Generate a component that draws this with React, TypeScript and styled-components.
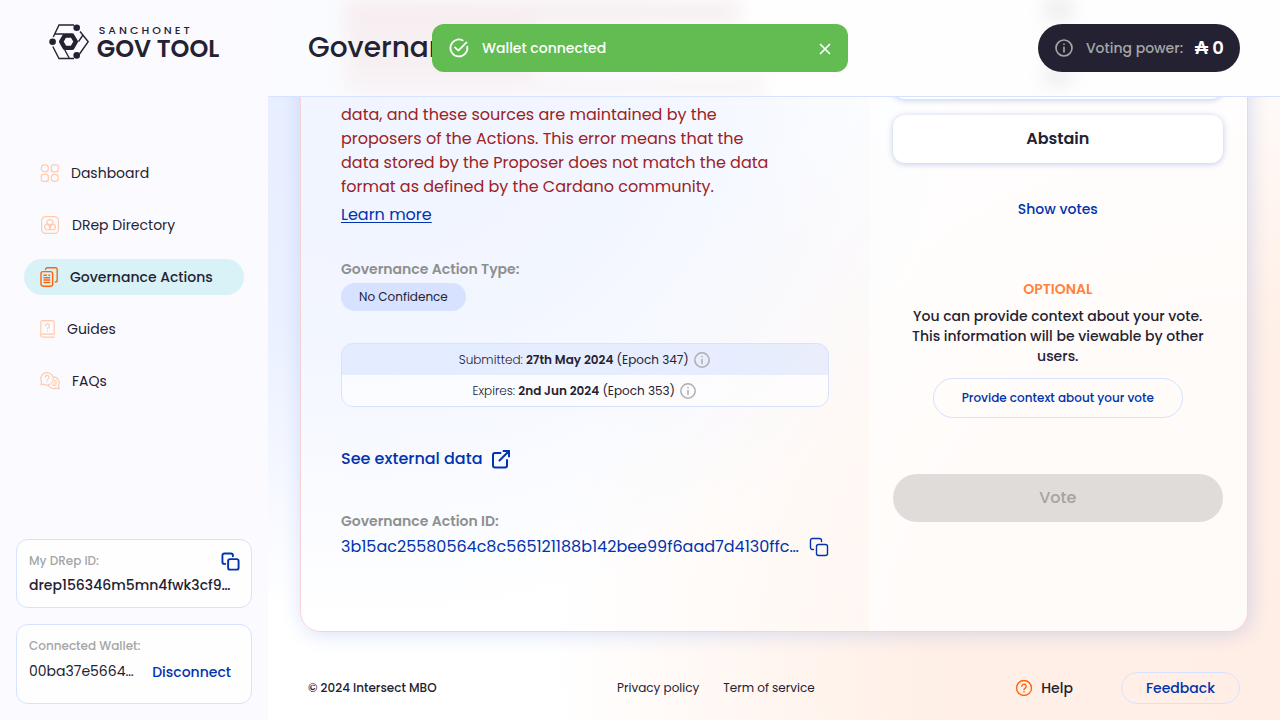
import React from "react";
import styled, { createGlobalStyle } from "styled-components";

const ink = "#242232";
const blue = "#0033ad";
const orange = "#ff640a";
const line = "#d6e2ff";

const GlobalStyle = createGlobalStyle`
  *, *::before, *::after { box-sizing: border-box; }
  body {
    margin: 0;
    color: ${ink};
    background: #fff;
    font-family: Poppins, "Open Sans", sans-serif;
    font-size: 14px;
    line-height: 20px;
  }
  h1, h2, p, ul, dl, dd { margin: 0; padding: 0; }
  ul { list-style: none; }
  a { color: inherit; text-decoration: none; }
  button { font: inherit; color: inherit; border: 0; background: none; padding: 0; cursor: pointer; }
  svg { display: block; flex: none; }
`;

/* ---------- icons ---------- */

const Glyph = styled.svg.attrs({ fill: "none", "aria-hidden": true })`
  stroke: currentColor;
  stroke-linecap: round;
  stroke-linejoin: round;
`;

const CopyIcon = ({ weight = 2, size = 20 }: { weight?: number; size?: number }) => (
  <Glyph width={size} height={size} viewBox="0 0 20 20" strokeWidth={weight}>
    <rect x="7.5" y="7.5" width="11" height="11" rx="2" />
    <path d="M4.500 12.500h-1a2 2 0 0 1-2-2v-7a2 2 0 0 1 2-2h7a2 2 0 0 1 2 2v1" />
  </Glyph>
);

const ExternalIcon = () => (
  <Glyph width="20" height="20" viewBox="0 0 20 20" strokeWidth="2">
    <path d="M16 11v5.500a2 2 0 0 1-2 2H4a2 2 0 0 1-2-2V6a2 2 0 0 1 2-2h5.500" />
    <path d="M12.500 2H18v5.500M8.500 11.500 18 2" />
  </Glyph>
);

const InfoIcon = ({ size = 18 }: { size?: number }) => (
  <Glyph width={size} height={size} viewBox="0 0 18 18" strokeWidth="1.500">
    <circle cx="9" cy="9" r="7.200" />
    <path d="M9 8.500v4M9 5.500v.2" />
  </Glyph>
);

const HelpIcon = () => (
  <Glyph width="18" height="18" viewBox="0 0 18 18" strokeWidth="1.400">
    <circle cx="9" cy="9" r="7.500" />
    <path d="M6.900 7.300a2.100 2.100 0 1 1 3.200 1.800c-.7.400-1.100.8-1.100 1.600M9 12.800v.1" />
  </Glyph>
);

const CheckCircleIcon = () => (
  <Glyph width="22" height="22" viewBox="0 0 22 22" strokeWidth="1.700">
    <path d="M19.300 9.600A8.500 8.500 0 1 1 14.800 3.400" />
    <path d="m7 10.300 3.400 3.400L18.500 5.300" />
  </Glyph>
);

const CloseIcon = () => (
  <Glyph width="14" height="14" viewBox="0 0 14 14" strokeWidth="1.700">
    <path d="m2.500 3.500 9 9M11.500 3.500l-9 9" />
  </Glyph>
);

const DashboardIcon = () => (
  <Glyph width="19" height="20" viewBox="0 0 19 20" strokeWidth="1.200">
    <rect x="1.300" y="1.800" width="7" height="7" rx="3" />
    <rect x="11.300" y="1.800" width="7" height="7" rx="2" />
    <rect x="1.300" y="11.400" width="7" height="7" rx="2" />
    <rect x="11.300" y="11.400" width="7" height="7" rx="3.400" />
  </Glyph>
);

const DirectoryIcon = () => (
  <Glyph width="20" height="20" viewBox="0 0 20 20" strokeWidth="1.200">
    <rect x="1.600" y="1.600" width="16.800" height="16.800" rx="4" />
    <circle cx="10" cy="7.600" r="3" />
    <circle cx="7.600" cy="12" r="3" />
    <circle cx="12.400" cy="12" r="3" />
  </Glyph>
);

const ActionsIcon = () => (
  <Glyph width="18" height="20" viewBox="0 0 18 20" strokeWidth="1.400">
    <rect x="1" y="4.600" width="11.600" height="14.600" rx="2" />
    <path d="M5.600 2.600c0-1 .8-1.800 1.800-1.800h8c1 0 1.800.8 1.800 1.800v10.600c0 1-.8 1.800-1.800 1.800" />
    <path d="M4 8.300h2.500M8.800 8.300h.9M4 10.700h5.700M4 13h5.700M4 15.500h5.700" />
  </Glyph>
);

const GuidesIcon = () => (
  <Glyph width="15" height="20" viewBox="0 0 15 20" strokeWidth="1.200">
    <path d="M14.200 15.200V3.300c0-1-.6-1.600-1.600-1.600H2.600C1.600 1.700.8 2.300.8 3.300v12.900M14.200 15.200H2.600c-1 0-1.800.6-1.800 1.500s.8 1.500 1.800 1.500h11.600" />
    <path d="M5.600 6.800a1.900 1.900 0 1 1 2.800 1.700c-.6.300-.9.700-.9 1.300M7.500 11.800v.1" />
  </Glyph>
);

const FaqIcon = () => (
  <Glyph width="20" height="20" viewBox="0 0 20 20" strokeWidth="1.200">
    <path d="M7 1.600a6.200 6.200 0 1 1-3 11.600l-3 .700.600-3A6.200 6.200 0 0 1 7 1.600Z" />
    <path d="M5.200 6.300a1.900 1.900 0 1 1 2.800 1.700c-.6.300-.9.600-.9 1.100M7.100 11v.1" />
    <path d="M13.300 5.800a6 6 0 0 1 5.200 8.800l.700 3.100-3.200-.6a6 6 0 0 1-7.600-2.600M14.500 9.800h2M14.200 12h2.600M12.500 14.200h3.500" />
  </Glyph>
);

const HexMark = () => (
  <svg width="40" height="36" viewBox="0 0 40 36" fill="none" stroke={ink} strokeWidth="1.400" aria-hidden="true">
    <path d="M4.300 13 10 1h15M31 7.500l8.200 10.200L30.500 30M25 34.500H10L3.800 22.500M5.500 10H15M34.300 10.500l-4.800 7.200M15.800 26l4.400 8" />
    <circle cx="27.700" cy="3.800" r="3.300" fill={ink} stroke="none" />
    <circle cx="3.600" cy="17.700" r="3.300" fill={ink} stroke="none" />
    <circle cx="27.700" cy="31.400" r="3.300" fill={ink} stroke="none" />
    <path d="M15.800 11.500h7.400l3.600 6.200-3.600 6.200h-7.400l-3.600-6.200Z" strokeWidth="4.400" strokeLinejoin="round" />
  </svg>
);

/* ---------- shell ---------- */

const Shell = styled.div`
  display: grid;
  grid-template-columns: 268px minmax(0, 1fr);
  height: 100vh;
  min-height: 640px;
`;

const Sidebar = styled.aside`
  display: flex;
  flex-direction: column;
  padding: 24px 16px 16px;
  background: #fbfbff;
`;

const Logo = styled.a`
  display: flex;
  align-items: center;
  justify-content: center;
  gap: 8px;
  height: 36px;
`;

const LogoText = styled.span`
  display: grid;
  font-weight: 600;
  font-size: 24px;
  line-height: 24px;
`;

const LogoNet = styled.span`
  padding-left: 2px;
  font-weight: 500;
  font-size: 11px;
  line-height: 14px;
  letter-spacing: 3px;
`;

const Nav = styled.nav`
  padding: 95px 8px 0;
  flex: 1;
`;

const NavList = styled.ul`
  display: grid;
  gap: 16px;
`;

const NavLink = styled.a<{ $active?: boolean }>`
  display: flex;
  align-items: center;
  gap: 12px;
  height: 36px;
  padding: 0 16px;
  border-radius: 18px;
  font-weight: ${(p) => (p.$active ? 500 : 400)};
  background: ${(p) => (p.$active ? "#d8f2f7" : "transparent")};
  svg { color: ${(p) => (p.$active ? orange : "#ffcbad")}; }
`;

const SideCards = styled.div`
  display: grid;
  gap: 16px;
`;

const SideCard = styled.section<{ $tall?: boolean }>`
  display: grid;
  align-content: start;
  gap: 4px;
  padding: 11px;
  padding-bottom: ${(p) => (p.$tall ? "21px" : "12px")};
  border: 1px solid ${line};
  border-radius: 12px;
  background: #fefeff;
`;

const SideRow = styled.div`
  display: flex;
  align-items: center;
  justify-content: space-between;
  padding-left: 1px;
`;

const SideLabel = styled.span`
  font-size: 12px;
  font-weight: 500;
  color: #a5a6a5;
`;

const SideValue = styled.span<{ $strong?: boolean }>`
  overflow: hidden;
  text-overflow: ellipsis;
  white-space: nowrap;
  font-weight: ${(p) => (p.$strong ? 500 : 400)};
`;

const TextButton = styled.button`
  font-weight: 500;
  color: ${blue};
`;

const Disconnect = styled(TextButton)`
  padding: 2px 9px 0 0;
`;

const IconButton = styled.button<{ $light?: boolean }>`
  display: grid;
  place-items: center;
  color: ${(p) => (p.$light ? "#fff" : blue)};
`;

/* ---------- main ---------- */

const Main = styled.main`
  position: relative;
  min-height: 0;
  background:
    radial-gradient(ellipse 60% 70% at 10% 16%, rgba(214, 226, 255, 0.6) 0%, rgba(214, 226, 255, 0.5) 45%, rgba(214, 226, 255, 0) 100%),
    radial-gradient(ellipse 72% 94% at 100% 92%, #ffeee5 0%, #fff0e7 50%, rgba(255, 240, 231, 0) 100%),
    #fff;
`;

const TopBar = styled.header`
  position: absolute;
  z-index: 1;
  inset: 0 0 auto;
  display: flex;
  align-items: center;
  justify-content: space-between;
  padding: 24px 40px;
  overflow: hidden;
  border-bottom: 1px solid ${line};
  background: linear-gradient(90deg, #fafbff, #fefeff 40%, #fefefe);

  &::before {
    content: "";
    position: absolute;
    z-index: -1;
    inset: 0;
    filter: blur(10px);
    background:
      linear-gradient(#f6edf0, #f6edf0) 76px 0 / 394px 24px no-repeat,
      linear-gradient(#f7f0f3, #f7f0f3) 76px 24px / 192px 52px no-repeat,
      linear-gradient(#f8f3f6, #f8f3f6) 76px 76px / 420px 24px no-repeat,
      linear-gradient(#e4e4e6, #e4e4e6) right 210px top 2px / 24px 16px no-repeat,
      linear-gradient(#e4e4e6, #e4e4e6) right 210px top 68px / 24px 14px no-repeat;
  }
`;

const Title = styled.h1`
  font-size: 28px;
  font-weight: 500;
  line-height: 48px;
`;

const PowerPill = styled.div`
  display: flex;
  align-items: center;
  height: 48px;
  padding: 0 16px;
  border-radius: 24px;
  background: ${ink};
  color: #a5a6a5;
  font-weight: 500;
  svg { margin-right: 12px; }
`;

const PowerValue = styled.strong`
  margin-left: 12px;
  font-size: 18px;
  font-weight: 600;
  color: #fff;
`;

const Scroller = styled.div`
  display: flex;
  flex-direction: column-reverse;
  height: 100%;
  overflow-y: auto;
  scrollbar-width: none;
`;

const Content = styled.div`
  flex: none;
  padding: 96px 32px 0;
`;

const Card = styled.article`
  display: grid;
  grid-template-columns: 3fr 2fr;
  border: 1px solid #f8d3d3;
  border-radius: 20px;
  overflow: hidden;
  background: rgba(255, 255, 255, 0.4);
  box-shadow: 2px 2px 20px 0 rgba(47, 98, 220, 0.2);
`;

const Details = styled.div`
  display: flex;
  flex-direction: column;
  justify-content: flex-end;
  min-width: 0;
  padding: 40px 40px 72px;
`;

const ErrorBlock = styled.div`
  padding-right: 48px;
  color: #9c2224;
`;

const ErrorText = styled.p`
  font-size: 16px;
  line-height: 24px;
`;

const LearnMore = styled.a`
  display: inline-block;
  margin-top: 4px;
  font-size: 16px;
  line-height: 24px;
  color: ${blue};
  text-decoration: underline;
  text-decoration-thickness: 1px;
  text-underline-offset: 2px;
`;

const Label = styled.h2`
  font-size: 14px;
  font-weight: 600;
  line-height: 20px;
  color: #8e908e;
`;

const TypeBlock = styled.section`
  display: grid;
  justify-items: start;
  gap: 4px;
  margin-top: 32px;
`;

const Chip = styled.span`
  padding: 4px 18px;
  border-radius: 14px;
  background: ${line};
  font-size: 12px;
`;

const Dates = styled.div`
  margin-top: 32px;
  border: 1px solid ${line};
  border-radius: 12px;
  overflow: hidden;
`;

const DateRow = styled.div<{ $tint?: boolean }>`
  display: flex;
  align-items: center;
  justify-content: center;
  gap: 4px;
  height: 31px;
  font-size: 12px;
  background: ${(p) => (p.$tint ? "rgba(214, 226, 255, 0.5)" : "rgba(255, 255, 255, 0.5)")};
  svg { color: #adaead; }
`;

const Light = styled.span`
  font-weight: 300;
`;

const Strong = styled.strong`
  font-weight: 600;
`;

const ExternalLink = styled.a`
  display: flex;
  width: fit-content;
  align-items: center;
  gap: 8px;
  margin: 40px 0;
  font-size: 16px;
  font-weight: 500;
  line-height: 24px;
  color: ${blue};
`;

const IdRow = styled.div`
  display: flex;
  align-items: center;
  justify-content: space-between;
  gap: 8px;
  margin-top: 4px;
  font-size: 16px;
  line-height: 24px;
  color: ${blue};
`;

const IdText = styled.span`
  overflow: hidden;
  text-overflow: ellipsis;
  white-space: nowrap;
`;

const VotePanel = styled.form`
  display: flex;
  flex-direction: column;
  align-items: center;
  justify-content: flex-end;
  min-width: 0;
  padding: 40px 24px 109px;
  background: rgba(255, 255, 255, 0.6);
`;

const Choices = styled.fieldset`
  display: grid;
  gap: 16px;
  width: 100%;
  margin: 0;
  padding: 0;
  border: 0;
`;

const Choice = styled.label`
  display: grid;
  place-items: center;
  height: 48px;
  border-radius: 12px;
  background: #fff;
  box-shadow: 0 1px 6px 0 rgba(0, 51, 173, 0.25);
  font-size: 16px;
  font-weight: 600;
  cursor: pointer;
  input { appearance: none; position: absolute; margin: 0; }
`;

const ShowVotes = styled(TextButton)`
  margin-top: 36px;
`;

const Optional = styled.p`
  margin-top: 60px;
  font-weight: 600;
  color: #ff833b;
`;

const Hint = styled.p`
  margin-top: 7px;
  padding: 0 8px;
  font-weight: 500;
  text-align: center;
`;

const Outline = styled.button<{ $small?: boolean }>`
  border: 1px solid ${line};
  border-radius: 20px;
  color: ${blue};
  font-weight: 500;
  font-size: ${(p) => (p.$small ? "12px" : "14px")};
  height: ${(p) => (p.$small ? "40px" : "32px")};
  padding: 0 ${(p) => (p.$small ? "28px" : "24px")};
`;

const ContextButton = styled(Outline)`
  margin-top: 12px;
`;

const VoteButton = styled.button`
  width: 100%;
  height: 48px;
  margin-top: 56px;
  border-radius: 24px;
  background: #e0dcd9;
  color: #a6a3a1;
  font-size: 16px;
  font-weight: 500;
  cursor: default;
`;

const Footer = styled.footer`
  display: flex;
  align-items: center;
  justify-content: space-between;
  padding: 40px 8px 16px;
  font-size: 12px;
`;

const Copyright = styled.p`
  font-weight: 500;
`;

const FootLinks = styled.div`
  display: flex;
  gap: 24px;
`;

const FootActions = styled.div`
  display: flex;
  align-items: center;
  gap: 48px;
`;

const HelpLink = styled.a`
  display: flex;
  align-items: center;
  gap: 8px;
  padding-left: 20px;
  font-size: 14px;
  font-weight: 500;
  svg { color: ${orange}; }
`;

/* ---------- toast ---------- */

const ToastLayer = styled.div`
  position: fixed;
  z-index: 2;
  inset: 24px 0 auto;
  display: flex;
  justify-content: center;
  pointer-events: none;
`;

const Toast = styled.div`
  display: flex;
  align-items: center;
  width: 416px;
  height: 48px;
  padding: 0 16px;
  border-radius: 12px;
  background: #62bc52;
  color: #fff;
  font-weight: 500;
  pointer-events: auto;
`;

const ToastText = styled.span`
  flex: 1;
  padding-left: 12px;
`;

const navItems = [
  { label: "Dashboard", icon: <DashboardIcon /> },
  { label: "DRep Directory", icon: <DirectoryIcon /> },
  { label: "Governance Actions", icon: <ActionsIcon />, active: true },
  { label: "Guides", icon: <GuidesIcon /> },
  { label: "FAQs", icon: <FaqIcon /> },
];

const dates = [
  { label: "Submitted:", date: "27th May 2024", epoch: "(Epoch 347)" },
  { label: "Expires:", date: "2nd Jun 2024", epoch: "(Epoch 353)" },
];

export default function App() {
  return (
    <Shell>
      <GlobalStyle />
      <Sidebar>
        <Logo href="#">
          <HexMark />
          <LogoText>
            <LogoNet>SANCHONET</LogoNet>
            <span>GOV TOOL</span>
          </LogoText>
        </Logo>
        <Nav>
          <NavList>
            {navItems.map((item) => (
              <li key={item.label}>
                <NavLink href="#" $active={item.active}>
                  {item.icon}
                  {item.label}
                </NavLink>
              </li>
            ))}
          </NavList>
        </Nav>
        <SideCards>
          <SideCard>
            <SideRow>
              <SideLabel>My DRep ID:</SideLabel>
              <IconButton aria-label="Copy DRep ID"><CopyIcon size={19} /></IconButton>
            </SideRow>
            <SideRow>
              <SideValue $strong>drep156346m5mn4fwk3cf9…</SideValue>
            </SideRow>
          </SideCard>
          <SideCard $tall>
            <SideRow>
              <SideLabel>Connected Wallet:</SideLabel>
            </SideRow>
            <SideRow>
              <SideValue>00ba37e5664…</SideValue>
              <Disconnect>Disconnect</Disconnect>
            </SideRow>
          </SideCard>
        </SideCards>
      </Sidebar>

      <Main>
        <Scroller>
          <Content>
            <Card>
              <Details>
                <ErrorBlock>
                  <ErrorText>
                    GovTool uses external sources for Governance Action data, and these sources are
                    maintained by the proposers of the Actions. This error means that the data stored by
                    the Proposer does not match the data format as defined by the Cardano community.
                  </ErrorText>
                  <LearnMore href="#">Learn more</LearnMore>
                </ErrorBlock>
                <TypeBlock>
                  <Label>Governance Action Type:</Label>
                  <Chip>No Confidence</Chip>
                </TypeBlock>
                <Dates>
                  {dates.map((d, i) => (
                    <DateRow key={d.label} $tint={i === 0}>
                      <span>
                        <Light>{d.label}</Light> <Strong>{d.date}</Strong> {d.epoch}
                      </span>
                      <InfoIcon />
                    </DateRow>
                  ))}
                </Dates>
                <ExternalLink href="#">
                  See external data
                  <ExternalIcon />
                </ExternalLink>
                <Label>Governance Action ID:</Label>
                <IdRow>
                  <IdText>3b15ac25580564c8c565121188b142bee99f6aad7d4130ffc…</IdText>
                  <IconButton aria-label="Copy governance action ID"><CopyIcon weight={1.4} /></IconButton>
                </IdRow>
              </Details>
              <VotePanel>
                <Choices aria-label="Your vote">
                  {["Yes", "No", "Abstain"].map((choice) => (
                    <Choice key={choice}>
                      <input type="radio" name="vote" value={choice} />
                      {choice}
                    </Choice>
                  ))}
                </Choices>
                <ShowVotes type="button">Show votes</ShowVotes>
                <Optional>OPTIONAL</Optional>
                <Hint>
                  You can provide context about your vote. This information will be viewable by other
                  users.
                </Hint>
                <ContextButton type="button" $small>Provide context about your vote</ContextButton>
                <VoteButton type="submit" disabled>Vote</VoteButton>
              </VotePanel>
            </Card>
            <Footer>
              <Copyright>© 2024 Intersect MBO</Copyright>
              <FootLinks>
                <a href="#">Privacy policy</a>
                <a href="#">Term of service</a>
              </FootLinks>
              <FootActions>
                <HelpLink href="#">
                  <HelpIcon />
                  Help
                </HelpLink>
                <Outline>Feedback</Outline>
              </FootActions>
            </Footer>
          </Content>
        </Scroller>
        <TopBar>
          <Title>Governance Actions</Title>
          <PowerPill>
            <InfoIcon size={20} />
            Voting power:
            <PowerValue>₳ 0</PowerValue>
          </PowerPill>
        </TopBar>
      </Main>

      <ToastLayer>
        <Toast role="status">
          <CheckCircleIcon />
          <ToastText>Wallet connected</ToastText>
          <IconButton $light aria-label="Dismiss"><CloseIcon /></IconButton>
        </Toast>
      </ToastLayer>
    </Shell>
  );
}
